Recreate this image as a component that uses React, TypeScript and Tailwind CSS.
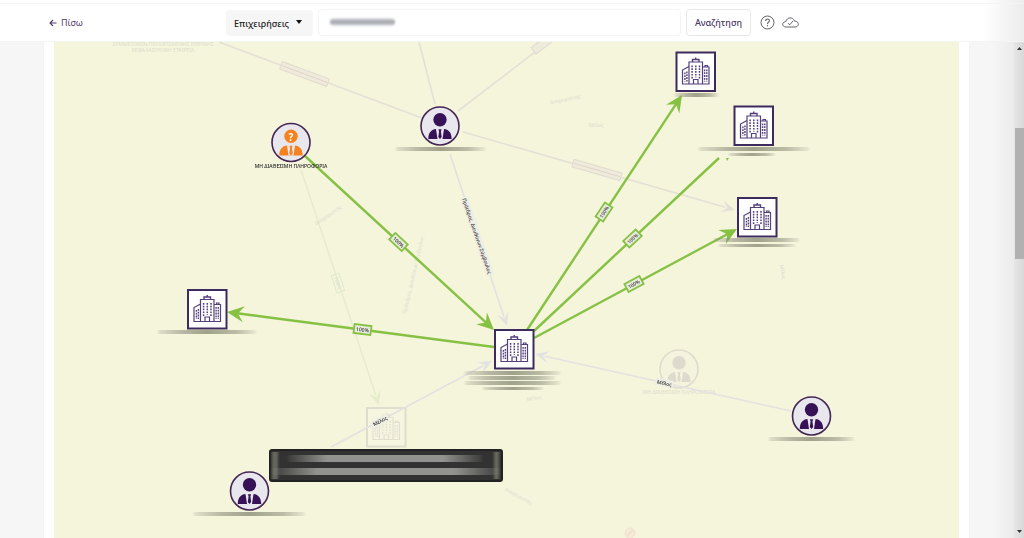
import { ReactNode } from 'react';

type Point = [number, number];

const GREEN = '#86c144';
const LAVENDER = '#e3e1e1';
const FAINT = '#e5e0d6';

const companies: Point[] = [
  [695.5, 71.5],
  [753.5, 125.5],
  [757, 217],
  [514, 349],
  [207, 309],
];

const people: Point[] = [
  [440, 126],
  [811.5, 416],
  [249.5, 491],
];

const holdings: { from: Point; to: Point; at: Point; arrow: boolean }[] = [
  { from: [305, 156], to: [494, 330], at: [398.5, 242], arrow: true },
  { from: [494, 347], to: [227, 312], at: [362.5, 329.5], arrow: true },
  { from: [527, 330], to: [682, 95], at: [604, 212], arrow: true },
  { from: [534, 331], to: [719, 158], at: [632.5, 238.5], arrow: false },
  { from: [534, 338], to: [737, 229], at: [634, 284], arrow: true },
];

const roles: { from: Point; to: Point; color: string; arrow: boolean }[] = [
  { from: [219, 42], to: [422, 118], color: FAINT, arrow: false },
  { from: [419, 42], to: [435, 104], color: FAINT, arrow: false },
  { from: [458, 111], to: [548, 42], color: FAINT, arrow: false },
  { from: [463, 132], to: [735, 210], color: FAINT, arrow: true },
  { from: [450, 154], to: [507, 326], color: LAVENDER, arrow: true },
  { from: [331, 447], to: [492, 361], color: LAVENDER, arrow: true },
  { from: [791, 411], to: [535, 354], color: LAVENDER, arrow: true },
];

// hidden names: x, y, width, height
const smudges: [number, number, number, number][] = [
  [675, 93, 43, 4],
  [396, 147, 89, 4],
  [699, 147, 110, 4],
  [729, 153, 46, 3],
  [714, 238, 85, 4],
  [719, 244, 76, 3],
  [158, 330, 98, 4],
  [465, 371, 95, 4],
  [469, 376, 86, 4],
  [465, 381, 95, 4],
  [483, 387, 60, 3],
  [769, 437, 85, 4],
  [194, 512, 111, 4],
];

function angle([x1, y1]: Point, [x2, y2]: Point) {
  return (Math.atan2(y2 - y1, x2 - x1) * 180) / Math.PI;
}

function Edge({ from, to, color, width, arrow }: { from: Point; to: Point; color: string; width: number; arrow: boolean }) {
  const turn = angle(from, to);
  const back = arrow ? 10 : 0;
  const rad = (turn * Math.PI) / 180;
  return (
    <g>
      <line
        x1={from[0]}
        y1={from[1]}
        x2={to[0] - back * Math.cos(rad)}
        y2={to[1] - back * Math.sin(rad)}
        stroke={color}
        strokeWidth={width}
      />
      {arrow && (
        <path
          d={width > 2 ? 'M0 0 L-17 -8 L-11 0 L-17 8 Z' : 'M0 0 L-14 -6 L-8 0 L-14 6 Z'}
          fill={color}
          transform={`translate(${to[0]} ${to[1]}) rotate(${turn})`}
        />
      )}
    </g>
  );
}

function Company({ at }: { at: Point }) {
  return (
    <g transform={`translate(${at[0]} ${at[1]})`}>
      <rect x="-19" y="-19" width="38.5" height="38.5" fill="#fff" stroke="#3d2a5e" strokeWidth="2" />
      <g fill="none" stroke="#54407a" strokeWidth="1.2">
        <path d="M-6.5 12.5 V-9.5 H7 V12.5" />
        <path d="M-3 -9.5 V-12 H3.5 V-9.5 M0.2 -12 V-14" strokeWidth="1.4" />
        <path d="M-6.5 -5 L-13 -1.5 V12.5 H13.5 V-4.5 H7 M9.5 -4.5 V-6 H12 V-4.5" />
        <path d="M-2 12.5 V8 H2.5 V12.5" />
        <path d="M-3.4 -6 V7 M0.3 -6 V6 M4 -6 V7" strokeWidth="1.5" strokeDasharray="1.7 1.1" />
        <path d="M-10.6 1 V10 M-8.6 0 V10 M9.1 -2 V10 M11.3 -2 V10" strokeWidth="1.4" strokeDasharray="1.8 1" />
      </g>
    </g>
  );
}

function Person({ at, color = '#371257', children }: { at: Point; color?: string; children?: ReactNode }) {
  return (
    <g transform={`translate(${at[0]} ${at[1]})`}>
      <circle r="19" fill="#e9e7ee" stroke="#432654" strokeWidth="1.6" />
      <circle cy="-6.3" r="6.7" fill={color} />
      <path d="M-11.7 13 C-11.7 6.5 -8.5 3.5 -4 3 L0 9 L4 3 C8.5 3.5 11.7 6.5 11.7 13 Z" fill={color} />
      <path d="M-4 3 L-2.5 13 H2.5 L4 3 Z" fill="#e9e7ee" />
      <path d="M-1.6 3.2 H1.6 L0.9 5.4 L1.7 11 L0 13 L-1.7 11 L-0.9 5.4 Z" fill={color} />
      {children}
    </g>
  );
}

function EdgeText({ at, turn, fill = '#e0dfcd', children }: { at: Point; turn: number; fill?: string; children: string }) {
  return (
    <text
      transform={`translate(${at[0]} ${at[1]}) rotate(${turn})`}
      textAnchor="middle"
      dominantBaseline="central"
      fontSize="5"
      fill={fill}
    >
      {children}
    </text>
  );
}

function Graph() {
  return (
    <svg
      viewBox="54 42 905 496"
      preserveAspectRatio="xMidYMin slice"
      className="block h-full w-full font-['Noto_Sans','Open_Sans',sans-serif] font-medium"
      role="img"
      aria-label="Γράφημα επιχειρήσεων"
    >
      <defs>
        <linearGradient id="smudge">
          <stop offset="0" stopColor="#8e8f7d" stopOpacity="0.25" />
          <stop offset="0.25" stopColor="#8e8f7d" stopOpacity="0.8" />
          <stop offset="0.5" stopColor="#85866f" />
          <stop offset="0.8" stopColor="#8e8f7d" stopOpacity="0.75" />
          <stop offset="1" stopColor="#8e8f7d" stopOpacity="0.15" />
        </linearGradient>
        <linearGradient id="tipSmudge">
          <stop offset="0" stopColor="#929290" stopOpacity="0.1" />
          <stop offset="0.2" stopColor="#929290" />
          <stop offset="0.8" stopColor="#929290" />
          <stop offset="1" stopColor="#929290" stopOpacity="0.1" />
        </linearGradient>
        <filter id="soften" x="-5%" y="-100%" width="110%" height="300%">
          <feGaussianBlur stdDeviation="1 0.6" />
        </filter>
      </defs>

      {/* Dimmed part of the network */}
      <g opacity="0.12">
        <Company at={[386, 427]} />
        <Person at={[679, 369]} />
        <circle cx="630" cy="533" r="5" fill="#f9a4a4" stroke="#d05070" />
        <path d="M627 536 L633 530" stroke="#d05070" strokeWidth="2" />
      </g>
      <Edge from={[301, 170]} to={[379, 405]} color="#e5ebcb" width={1.4} arrow />
      <rect x="-9" y="-4" width="18" height="8" fill="none" stroke="#dfeac6" transform="translate(338 283) rotate(72)" />
      <EdgeText at={[338, 283]} turn={72}>100%</EdgeText>
      <EdgeText at={[163, 44]} turn={0}>ΣΥΜΜΕΤΟΧΩΝ ΠΕΡΙΟΡΙΣΜΕΝΗΣ ΕΥΘΥΝΗΣ</EdgeText>
      <EdgeText at={[163, 50]} turn={0}>ΚΕΦΑΛΑΙΟΥΧΙΚΗ ΕΤΑΙΡΕΙΑ</EdgeText>
      <EdgeText at={[679, 392]} turn={0}>ΜΗ ΔΙΑΘΕΣΙΜΗ ΠΛΗΡΟΦΟΡΙΑ</EdgeText>
      <EdgeText at={[328, 215]} turn={-34}>Διαχειριστής</EdgeText>
      <EdgeText at={[413, 275]} turn={-77}>Πρόεδρος, Διευθύνων Σύμβουλος</EdgeText>
      <EdgeText at={[565, 99]} turn={-12}>Διαχειριστής</EdgeText>
      <EdgeText at={[596, 125]} turn={0}>Μέλος</EdgeText>
      <EdgeText at={[783, 272]} turn={80}>Μέλος</EdgeText>
      <EdgeText at={[534, 398]} turn={-8}>Μέλος</EdgeText>
      <EdgeText at={[519, 496]} turn={30}>Διαχειριστής</EdgeText>

      {roles.map((edge, i) => (
        <Edge key={i} {...edge} width={1.6} />
      ))}
      <g fill="#eeebda" stroke="#e1dad2">
        <rect x="-25" y="-4" width="50" height="8" transform="translate(304.5 74) rotate(20.5)" />
        <rect x="-25" y="-4" width="50" height="8" transform="translate(597 170) rotate(16)" />
        <rect x="-8" y="-4" width="22" height="8" transform="translate(540 46) rotate(-37)" />
      </g>
      <path d="M-24 0 H24" stroke="#dfcfca" transform="translate(304.5 74) rotate(20.5)" />
      <path d="M-24 0 H24" stroke="#dfcfca" transform="translate(597 170) rotate(16)" />

      <g fill="#efeee4">
        <rect x="-41" y="-4" width="82" height="8" transform="translate(477 236) rotate(71)" />
        <rect x="-9" y="-4" width="18" height="8" transform="translate(380 421) rotate(-28)" />
        <rect x="-9" y="-4" width="18" height="8" transform="translate(664.5 383) rotate(12)" />
      </g>
      <EdgeText at={[477, 236]} turn={71} fill="#333">Πρόεδρος, Διευθύνων Σύμβουλος</EdgeText>
      <EdgeText at={[380, 421]} turn={-28} fill="#222">Μέλος</EdgeText>
      <EdgeText at={[664.5, 383]} turn={12} fill="#222">Μέλος</EdgeText>

      {/* Shareholdings */}
      {holdings.map(({ from, to, at, arrow }, i) => {
        const turn = angle(from, to);
        const upright = Math.abs(turn) > 90 ? turn + 180 : turn;
        return (
          <g key={i}>
            <Edge from={from} to={to} color={GREEN} width={2.4} arrow={arrow} />
            <rect
              x="-8.5"
              y="-4.5"
              width="17"
              height="9"
              fill="#e9ebdb"
              stroke={GREEN}
              strokeWidth="1.8"
              transform={`translate(${at[0]} ${at[1]}) rotate(${upright})`}
            />
            <EdgeText at={at} turn={upright} fill="#333">100%</EdgeText>
          </g>
        );
      })}
      <path d="M726 158 H729 L727 161 Z" fill={GREEN} />

      <g fill="url(#smudge)" filter="url(#soften)">
        {smudges.map(([x, y, width, height], i) => (
          <rect key={i} x={x} y={y} width={width} height={height} opacity="0.75" />
        ))}
      </g>

      {companies.map((at, i) => (
        <Company key={i} at={at} />
      ))}
      {people.map((at, i) => (
        <Person key={i} at={at} />
      ))}
      <Person at={[291, 142.5]} color="#f5821f">
        <text y="-6" textAnchor="middle" dominantBaseline="central" fontSize="10" fontWeight="700" fill="#fff">?</text>
      </Person>
      <EdgeText at={[291, 166]} turn={0} fill="#222">ΜΗ ΔΙΑΘΕΣΙΜΗ ΠΛΗΡΟΦΟΡΙΑ</EdgeText>

      {/* Tooltip */}
      <g>
        <rect x="270" y="450" width="232" height="31" rx="2" fill="#323232" stroke="#222" strokeWidth="2" />
        <g fill="#66665d" filter="url(#soften)">
          <rect x="272" y="452" width="6" height="27" />
          <rect x="494" y="452" width="5" height="27" />
        </g>
        <g fill="url(#tipSmudge)" filter="url(#soften)">
          <rect x="288" y="455" width="194" height="7" />
          <rect x="272" y="468" width="228" height="7" />
        </g>
      </g>
    </svg>
  );
}

function Header() {
  return (
    <header className="border-b border-gray-100 bg-linear-to-r from-white from-96% to-[#ececec]">
      <div className="h-1 border-b border-gray-100" />
      <div className="grid h-[37px] grid-cols-[226px_1fr_225px] items-center">
        <a href="#back" className="flex items-center gap-1 pl-[49px] text-[9px] text-[#514066]">
          <svg viewBox="0 0 8 8" className="h-2 w-2" fill="none" stroke="currentColor" strokeWidth="1.1">
            <path d="M7.5 4 H1 M4 1 L1 4 L4 7" />
          </svg>
          Πίσω
        </a>
        <form className="flex items-center" onSubmit={(e) => e.preventDefault()}>
          <div className="relative">
            <select
              aria-label="Κατηγορία"
              className="h-[26px] w-[87px] appearance-none rounded-sm bg-[#f6f6f7] pl-2 text-[9px] font-medium text-[#222]"
            >
              <option>Επιχειρήσεις</option>
            </select>
            <svg viewBox="0 0 6 4" className="pointer-events-none absolute top-[11px] right-[11px] h-1 w-1.5">
              <path d="M0 0 H6 L3 4 Z" fill="#111" />
            </svg>
          </div>
          <div className="relative ml-[5px] flex-1">
            <input
              type="text"
              aria-label="Αναζήτηση επιχείρησης"
              className="block h-[27px] w-full rounded-sm border border-gray-100 bg-white px-2 text-[9px]"
            />
            <span className="pointer-events-none absolute top-[9px] left-3 h-2 w-[65px] rounded-sm bg-linear-to-b from-gray-200 via-[#9c9ea4] to-gray-200 blur-[1px]" />
          </div>
          <button
            type="submit"
            className="ml-[5px] h-[27px] w-[65px] rounded-sm border border-gray-200 bg-white text-[9px] font-medium text-[#4a3863]"
          >
            Αναζήτηση
          </button>
          <button type="button" aria-label="Βοήθεια" className="ml-[9px]">
            <svg viewBox="0 0 15 15" className="h-[15px] w-[15px]" fill="none" stroke="#65626b">
              <circle cx="7.5" cy="7.5" r="6.5" />
              <path d="M5.6 6 C5.6 3.2 9.5 3.4 9.4 5.8 C9.3 7.2 7.5 7.2 7.5 8.9 M7.5 10 V11.2" strokeWidth="1.1" />
            </svg>
          </button>
          <button type="button" aria-label="Αποθηκευμένα" className="ml-[7px]">
            <svg viewBox="0 0 17 11" className="h-[11px] w-[17px]" fill="none" stroke="#65626b">
              <path d="M4 10 C-0.4 10 -0.2 4.8 3.8 4.6 C4.8 0 11.2 -0.4 12.4 4 C17.4 3.8 17.6 10 13 10 Z" />
              <path d="M6 6.2 L7.8 7.8 L11 4" />
            </svg>
          </button>
        </form>
      </div>
    </header>
  );
}

function Scrollbar() {
  return (
    <div className="flex w-[10px] flex-col items-center bg-linear-to-r from-[#e6e6e6] to-[#d8d8d8] py-[5px]">
      <svg viewBox="0 0 5 3" className="h-[3px] w-[5px]">
        <path d="M0 3 H5 L2.5 0 Z" fill="#333" />
      </svg>
      <div className="h-[16%]" />
      <div className="h-[27%] w-[9px] bg-[#b1b1b1]" />
      <div className="flex-1" />
      <svg viewBox="0 0 5 3" className="h-[3px] w-[5px]">
        <path d="M0 0 H5 L2.5 3 Z" fill="#333" />
      </svg>
    </div>
  );
}

export default function App() {
  return (
    <div className="flex h-screen flex-col overflow-hidden bg-[#f6f6f6] font-['Noto_Sans','Open_Sans',sans-serif]">
      <Header />
      <div className="flex min-h-0 flex-1">
        <main className="ml-[43px] min-w-0 flex-1 border-x border-gray-100 bg-white px-[10px]">
          <div className="h-full overflow-hidden bg-[#f5f5dc]">
            <Graph />
          </div>
        </main>
        <div className="w-[44px] bg-linear-to-r from-[#f6f6f6] from-50% to-[#ebebeb]" />
        <Scrollbar />
      </div>
    </div>
  );
}
